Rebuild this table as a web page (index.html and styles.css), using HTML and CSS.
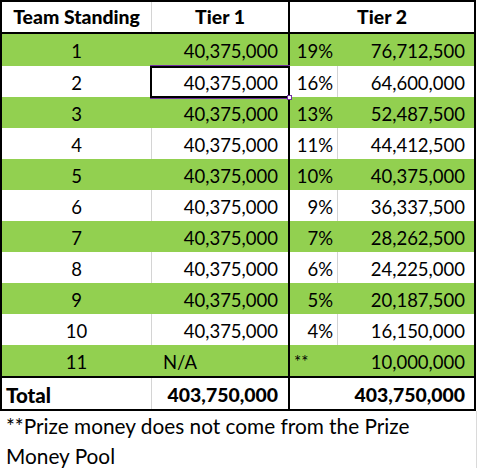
FILE: index.html
```html
<!DOCTYPE html>
<html>
<head>
<meta charset="utf-8">
<link rel="stylesheet" href="styles.css">
</head>
<body>
<div class="sheet">
  <div class="row head">
    <div class="c c1 ctr b">Team Standing</div>
    <div class="c c2 ctr b">Tier 1</div>
    <div class="c c34 ctr b">Tier 2</div>
  </div>
  <div class="row green first"><div class="c c1 ctr">1</div><div class="c c2 rt">40,375,000</div><div class="c c3 pct">19%</div><div class="c c4 rt">76,712,500</div></div>
  <div class="row white"><div class="c c1 ctr">2</div><div class="c c2 rt sel">40,375,000</div><div class="c c3 pct">16%</div><div class="c c4 rt">64,600,000</div></div>
  <div class="row green"><div class="c c1 ctr">3</div><div class="c c2 rt">40,375,000</div><div class="c c3 pct">13%</div><div class="c c4 rt">52,487,500</div></div>
  <div class="row white"><div class="c c1 ctr">4</div><div class="c c2 rt">40,375,000</div><div class="c c3 pct">11%</div><div class="c c4 rt">44,412,500</div></div>
  <div class="row green"><div class="c c1 ctr">5</div><div class="c c2 rt">40,375,000</div><div class="c c3 pct">10%</div><div class="c c4 rt">40,375,000</div></div>
  <div class="row white"><div class="c c1 ctr">6</div><div class="c c2 rt">40,375,000</div><div class="c c3 pct">9%</div><div class="c c4 rt">36,337,500</div></div>
  <div class="row green"><div class="c c1 ctr">7</div><div class="c c2 rt">40,375,000</div><div class="c c3 pct">7%</div><div class="c c4 rt">28,262,500</div></div>
  <div class="row white"><div class="c c1 ctr">8</div><div class="c c2 rt">40,375,000</div><div class="c c3 pct">6%</div><div class="c c4 rt">24,225,000</div></div>
  <div class="row green"><div class="c c1 ctr">9</div><div class="c c2 rt">40,375,000</div><div class="c c3 pct">5%</div><div class="c c4 rt">20,187,500</div></div>
  <div class="row white"><div class="c c1 ctr">10</div><div class="c c2 rt">40,375,000</div><div class="c c3 pct">4%</div><div class="c c4 rt">16,150,000</div></div>
  <div class="row green last"><div class="c c1 ctr">11</div><div class="c c2 na">N/A</div><div class="c c3 stars">**</div><div class="c c4 rt">10,000,000</div></div>
  <div class="row white total"><div class="c c1 lt b">Total</div><div class="c c2 rt b">403,750,000</div><div class="c c3"></div><div class="c c4 rt b">403,750,000</div></div>
</div>
<div class="note">
  <p class="line">**Prize money does not come from the Prize<br>Money Pool</p>
</div>
</body>
</html>
```

FILE: styles.css
```css
html, body {
  margin: 0;
  padding: 0;
  background: #ffffff;
}

body {
  font-family: Lato, "Open Sans", sans-serif;
  font-size: 18.5px;
  color: #000000;
}

.sheet {
  width: 472px;
  border: 2px solid #000000;
}

.row {
  display: grid;
  grid-template-columns: 150px 138px 48px 136px;
  height: 31px;
  box-sizing: border-box;
}

.row.first {
  height: 32px;
}

.row.head {
  height: 32px;
  border-bottom: 2px solid #000000;
  background: #ffffff;
  grid-template-columns: 150px 138px 184px;
}

.row.last {
  height: 33px;
  border-bottom: 2px solid #000000;
}

.green {
  background: #92d050;
}

.white {
  background: #ffffff;
}

.c {
  box-sizing: border-box;
  line-height: 28px;
  padding-top: 3px;
  white-space: nowrap;
  overflow: visible;
}

.head .c {
  padding-top: 1px;
}

.c2 {
  border-right: 2px solid #000000;
  position: relative;
}

.white .c1,
.head .c1 {
  border-right: 1px solid #d4d4d4;
}

.green .c1 {
  border-right: 1px solid #92d050;
}

.white .c3 {
  border-right: 1px solid #d4d4d4;
}

.green .c3 {
  border-right: 1px solid #92d050;
}

.total .c3 {
  border-right: 1px solid #ffffff;
}

.ctr {
  text-align: center;
}

.rt {
  text-align: right;
}

.lt {
  text-align: left;
  padding-left: 4px;
}

.b {
  font-weight: 900;
  font-size: 19.4px;
}

.total .lt {
  font-size: 20.5px;
}

.c2.rt {
  padding-right: 10px;
}

.c4.rt {
  padding-right: 9px;
}

.pct {
  text-align: right;
  padding-right: 4px;
}

.na {
  text-align: left;
  padding-left: 11px;
}

.stars {
  text-align: left;
  padding-left: 4px;
  font-size: 17px;
}

.sel::after {
  content: "";
  position: absolute;
  left: -2px;
  right: -2px;
  top: 0;
  bottom: -1px;
  border: 2px solid #000000;
  box-shadow: 0 -1px 0 #7030a0, 0 1px 0 #7030a0;
  pointer-events: none;
}

.sel::before {
  content: "";
  position: absolute;
  left: 135px;
  top: 29px;
  width: 3px;
  height: 3px;
  background: #ffffff;
  border: 1px solid #7030a0;
  z-index: 2;
}

.note {
  width: 476px;
  border-right: 1px solid #dadada;
  height: 60px;
}

.line {
  margin: 0;
  padding-left: 6px;
  font-size: 20.8px;
  line-height: 30px;
  white-space: nowrap;
}
```
